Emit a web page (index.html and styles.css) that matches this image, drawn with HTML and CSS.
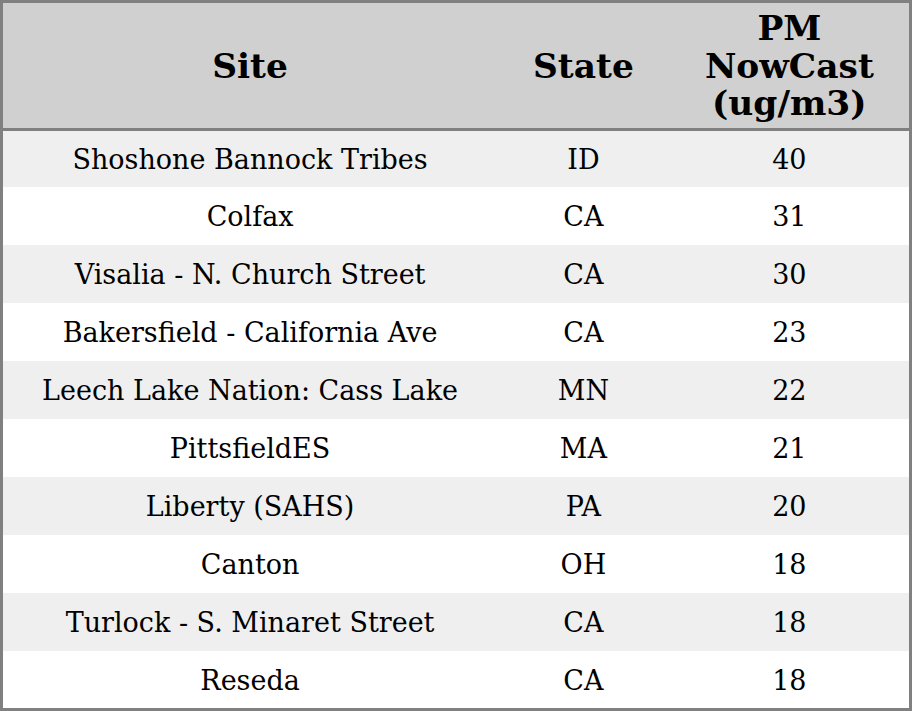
FILE: index.html
```html
<!DOCTYPE html>
<html>
<head>
<meta charset="utf-8">
<link rel="stylesheet" href="styles.css">
</head>
<body>
<table class="aq-table">
  <colgroup>
    <col class="col-site">
    <col class="col-state">
    <col class="col-pm">
  </colgroup>
  <thead>
    <tr>
      <th>Site</th>
      <th>State</th>
      <th>PM<br>NowCast<br>(ug/m3)</th>
    </tr>
  </thead>
  <tbody>
    <tr><td>Shoshone Bannock Tribes</td><td>ID</td><td>40</td></tr>
    <tr><td>Colfax</td><td>CA</td><td>31</td></tr>
    <tr><td>Visalia - N. Church Street</td><td>CA</td><td>30</td></tr>
    <tr><td>Bakersfield - California Ave</td><td>CA</td><td>23</td></tr>
    <tr><td>Leech Lake Nation: Cass Lake</td><td>MN</td><td>22</td></tr>
    <tr><td>PittsfieldES</td><td>MA</td><td>21</td></tr>
    <tr><td>Liberty (SAHS)</td><td>PA</td><td>20</td></tr>
    <tr><td>Canton</td><td>OH</td><td>18</td></tr>
    <tr><td>Turlock - S. Minaret Street</td><td>CA</td><td>18</td></tr>
    <tr><td>Reseda</td><td>CA</td><td>18</td></tr>
  </tbody>
</table>
</body>
</html>
```
FILE: styles.css
```css
html, body {
  margin: 0;
  padding: 0;
  background: #ffffff;
}

.aq-table {
  width: 912px;
  height: 711px;
  border-collapse: collapse;
  border: 3px solid #808080;
  font-family: "DejaVu Serif", serif;
  color: #000000;
  table-layout: fixed;
}

.col-site { width: 494px; }
.col-state { width: 172px; }
.col-pm { width: 240px; }

.aq-table th {
  background: #d0d0d0;
  font-size: 34.4px;
  font-weight: bold;
  line-height: 37.5px;
  height: 123px;
  padding: 2px 0 0;
  text-align: center;
  vertical-align: middle;
  border-bottom: 3px solid #808080;
}

.aq-table td {
  font-size: 27px;
  line-height: 30px;
  height: 56px;
  padding: 2px 0 0;
  text-align: center;
  vertical-align: middle;
}

.aq-table tbody tr:first-child td {
  height: 54px;
}

.aq-table tbody tr:last-child td {
  height: 55px;
}

.aq-table tbody tr:nth-child(odd) td {
  background: #efefef;
}
```
